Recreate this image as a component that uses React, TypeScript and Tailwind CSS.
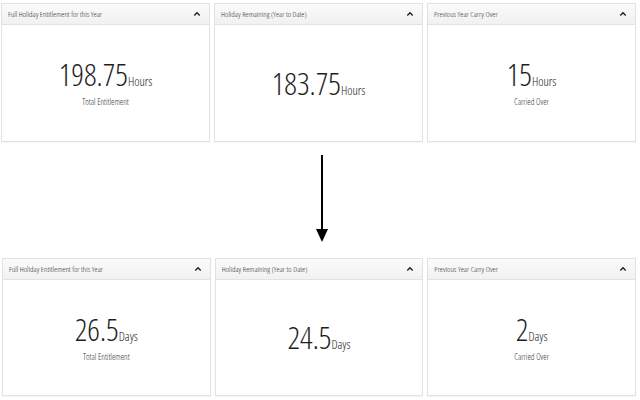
import React from "react";

function Chevron() {
  return (
    <svg width="8" height="6" viewBox="0 0 8 6" className="block">
      <polyline points="1.3,4.5 4,1.7 6.7,4.5" fill="none" stroke="#222" strokeWidth="1.4" />
    </svg>
  );
}

function Panel({ title, value, unit, sub }: { title: string; value: string; unit: string; sub?: string }) {
  return (
    <div className="flex flex-col border border-[#e2e2e2] bg-white shadow-[0_1px_1px_rgba(0,0,0,0.04)]">
      <div className="flex h-[21px] shrink-0 items-center justify-between border-b border-[#e2e2e2] bg-gradient-to-b from-[#fbfbfb] to-[#f1f1f1] pl-[6px] pr-[8px]">
        <span className="text-[8px] font-light leading-none text-[#333]">{title}</span>
        <Chevron />
      </div>
      <div className="flex flex-1 flex-col items-center justify-center">
        <div className="flex items-baseline">
          <span className="text-[31px] font-light leading-none text-[#1e1e1e]">{value}</span>
          <span className="text-[12.5px] font-light leading-none text-[#222]">{unit}</span>
        </div>
        {sub && <div className="mt-[8px] text-[8.5px] font-light leading-none text-[#333]">{sub}</div>}
      </div>
    </div>
  );
}

export default function App() {
  return (
    <div className="h-[400px] w-[640px] bg-white pt-[3px] font-['Open_Sans',sans-serif] [font-stretch:75%]">
      <div className="grid h-[139px] grid-cols-3 gap-[4px] pl-[1px] pr-[4px]">
        <Panel title="Full Holiday Entitlement for this Year" value="198.75" unit="Hours" sub="Total Entitlement" />
        <Panel title="Holiday Remaining (Year to Date)" value="183.75" unit="Hours" />
        <Panel title="Previous Year Carry Over" value="15" unit="Hours" sub="Carried Over" />
      </div>
      <div className="flex h-[116px] justify-center pl-[3px] pt-[13px]">
        <svg width="14" height="88" viewBox="0 0 14 88">
          <line x1="7" y1="0" x2="7" y2="76" stroke="#000" strokeWidth="2" />
          <polygon points="1,74 13,74 7,87" fill="#000" />
        </svg>
      </div>
      <div className="grid h-[138px] grid-cols-3 gap-[4px] pl-[2px] pr-[4px]">
        <Panel title="Full Holiday Entitlement for this Year" value="26.5" unit="Days" sub="Total Entitlement" />
        <Panel title="Holiday Remaining (Year to Date)" value="24.5" unit="Days" />
        <Panel title="Previous Year Carry Over" value="2" unit="Days" sub="Carried Over" />
      </div>
    </div>
  );
}
